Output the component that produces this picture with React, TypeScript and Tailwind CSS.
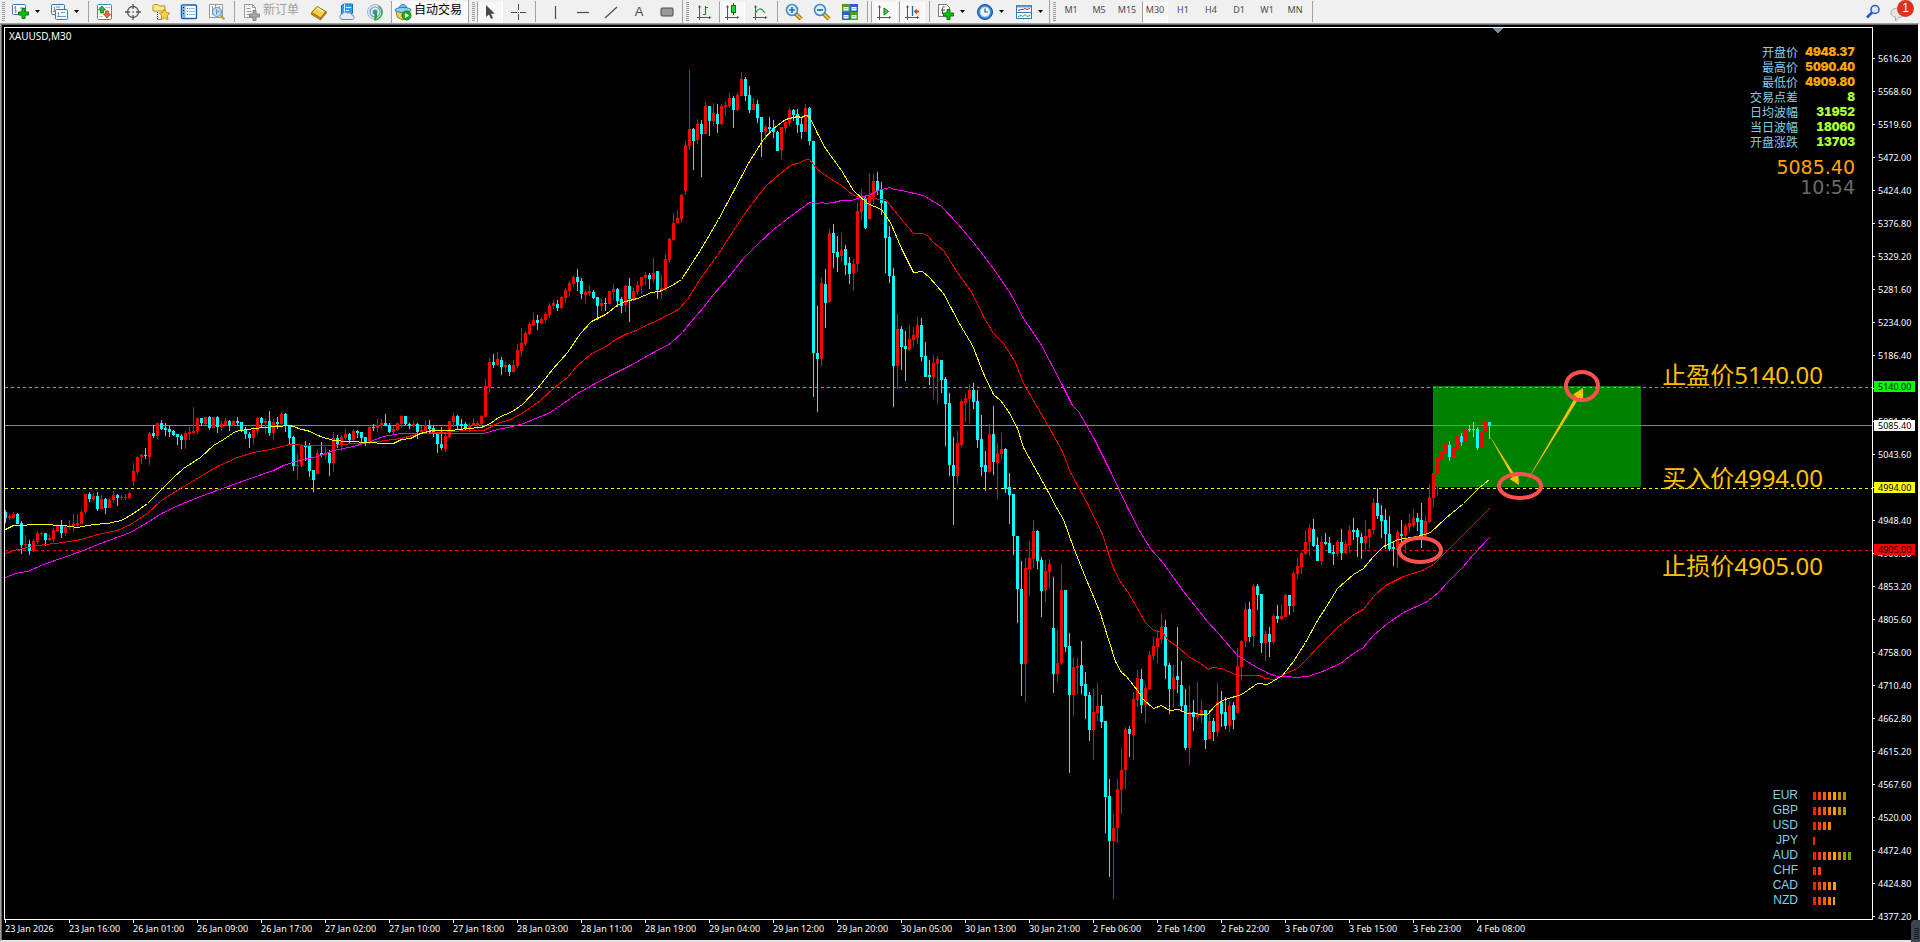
import { useState } from "react";
import type { ReactNode } from "react";
import clsx from "clsx";

type Candle = {
  up: boolean;
  high: number;
  top: number;
  bottom: number;
  low: number;
};

// direction,high,body top,body bottom,low - one entry per 30 minute bar
const CANDLE_DATA = `
c,510,512,518,523 r,514,516,518,520 r,512,514,518,519 c,513,514,524,524 c,521,523,545,554 r,535,544,545,547
c,540,544,551,555 r,539,541,551,552 r,531,533,542,544 r,532,533,534,537 c,533,533,540,546 r,535,538,540,541
r,528,530,539,542 r,524,525,531,532 c,520,525,533,538 r,525,527,533,536 r,520,526,527,530 r,514,524,526,532
r,515,523,525,528 r,510,512,524,524 r,494,494,512,514 c,492,494,499,502 r,493,496,499,501 c,492,496,509,511
r,495,499,509,509 c,498,499,508,514 r,499,500,508,508 r,491,495,500,503 c,494,495,498,506 r,495,497,498,500
r,494,497,498,500 r,492,493,498,499 r,463,471,481,486 r,457,457,472,474 r,454,455,457,464 c,448,455,456,459
r,432,433,457,465 c,425,433,436,438 r,423,423,436,439 c,420,423,429,430 c,423,428,430,436 c,426,429,432,437
c,430,431,435,436 c,434,434,437,445 c,434,436,440,449 r,431,433,440,449 r,427,432,434,440 r,407,431,433,434
r,418,418,431,434 c,418,418,423,426 r,417,417,424,425 c,416,417,428,430 r,417,417,428,428 c,416,417,427,433
r,421,424,427,431 r,418,421,425,426 c,420,421,425,431 r,420,421,425,426 c,417,421,423,426 c,422,422,430,432
c,427,430,434,439 c,432,434,438,448 r,427,430,438,445 r,417,418,431,434 c,417,418,423,427 r,418,421,423,434
c,411,421,433,436 r,419,422,433,440 c,417,422,424,429 r,412,414,424,428 c,413,414,426,432 c,426,426,438,444
c,436,437,466,471 r,454,465,466,479 r,444,445,465,467 c,441,445,447,461 c,443,446,471,477 c,470,470,480,492
r,450,453,474,474 c,442,453,455,457 r,447,453,455,459 c,450,453,463,476 r,432,438,463,472 c,435,438,444,448
r,435,437,445,451 r,429,434,438,440 c,433,434,440,444 r,429,431,440,441 c,430,431,433,438 c,432,432,438,442
c,437,437,442,446 r,425,427,442,444 c,424,427,428,431 r,419,425,428,432 r,419,423,426,429 c,414,423,426,426
c,423,425,432,433 r,426,429,432,435 r,423,423,430,431 r,415,416,424,428 c,416,416,424,425 c,423,424,426,429
r,421,424,426,427 c,423,424,432,439 r,426,430,432,433 r,421,425,431,433 c,420,425,429,433 c,425,428,432,437
c,432,432,444,453 c,427,444,448,450 r,432,436,449,452 r,421,421,437,438 r,413,416,422,427 c,415,416,425,429
c,419,424,426,430 c,422,424,428,431 r,423,425,429,432 r,418,423,426,426 r,421,423,426,429
r,415,416,424,426 r,379,386,417,417 r,358,362,387,393 c,354,362,365,368 r,352,359,365,366 c,357,360,367,375
r,362,365,367,372 c,364,365,372,376 r,360,365,372,372 r,344,350,366,368 r,328,343,351,356 r,331,333,344,346
r,322,324,334,335 r,313,320,325,326 c,315,320,323,330 r,317,319,323,324 r,312,314,320,323 r,303,305,315,318
r,300,303,306,309 c,300,304,308,311 r,296,297,308,309 r,288,290,298,303 r,281,283,291,297 r,276,277,284,287
c,269,277,282,291 c,278,281,294,299 r,290,292,295,303 r,286,291,293,296 c,290,292,298,299 c,297,297,306,320
r,299,303,306,311 c,298,303,304,311 r,291,291,304,304 r,284,289,292,299 c,288,289,301,307 c,297,299,306,313
r,285,286,305,312 c,278,286,299,322 r,288,291,299,301 r,281,285,292,295 r,277,277,286,294 r,272,275,278,285
c,273,275,279,289 r,258,273,279,283 c,271,271,290,299 r,275,288,290,299 r,254,259,289,291
r,238,239,260,263 r,213,223,240,241 r,210,218,223,223 r,194,195,219,222 r,141,145,191,195 r,70,129,146,150
c,128,129,141,170 r,119,124,140,144 c,120,124,134,177 r,102,106,134,134 c,106,106,121,136 r,103,113,121,126
c,104,114,124,133 r,104,106,124,125 r,102,105,107,116 r,93,98,106,108 c,96,98,110,128 r,93,95,110,111
r,72,79,96,96 c,77,79,96,101 c,86,95,110,113 r,98,104,110,110 c,100,104,118,123 c,117,117,132,157
r,125,127,132,140 c,117,127,129,132 c,120,128,132,138 c,131,132,151,151 r,127,127,150,159 r,120,122,128,133
r,108,110,123,126 c,109,110,115,121 c,109,114,125,133 c,117,124,132,139 r,104,108,132,132 c,107,108,141,145
c,141,141,353,397 c,306,353,359,412 r,278,283,359,366 c,269,284,303,328 r,229,233,302,302 c,224,233,253,268
c,236,252,257,272 r,233,250,256,262 c,245,249,265,275 c,257,263,274,284 r,259,264,273,290 r,202,211,264,271
r,189,199,212,220 c,197,198,228,229 r,174,196,219,219 r,174,181,197,204 c,172,181,191,195 c,182,189,203,215
c,201,201,238,273 c,226,237,276,283 c,268,276,366,407 r,314,329,366,389 c,326,329,347,370 c,331,346,349,381
r,325,339,350,351 r,327,335,340,346 r,317,325,338,344 c,318,325,357,361 c,342,356,377,377 c,360,375,377,385
r,355,363,377,399 r,356,359,364,404 c,360,360,380,393 c,377,379,404,446
c,393,403,465,476 c,437,465,476,525 r,431,443,476,485 r,399,401,445,447 r,394,398,403,422 r,384,390,399,423
c,383,390,402,409 c,390,401,440,448 c,415,439,467,476 c,451,465,472,491 r,424,434,472,473 c,406,434,462,475
r,443,453,463,499 r,433,449,454,459 c,448,449,489,493 c,473,487,495,524 c,494,494,536,555 c,536,536,589,623
c,561,589,664,696 r,558,568,664,702 r,541,558,569,596 r,520,531,559,568 c,530,531,561,569 c,557,560,591,617
r,560,571,590,602 r,559,564,572,589 c,577,628,674,693 r,630,663,674,682 r,564,590,663,665 c,590,590,647,652
c,633,646,695,773 r,657,667,695,716 r,658,666,668,694 c,641,665,686,694 c,672,684,696,719 c,692,695,730,741
r,689,712,730,760 r,683,706,713,721 c,695,706,722,728 c,721,721,797,833 c,779,796,841,877 r,814,828,841,899
r,779,789,828,843 r,748,770,790,814 r,727,729,770,789 c,726,729,734,757 r,692,699,735,760 r,670,678,700,707
c,669,679,705,713 r,684,688,705,723 r,651,655,689,690 r,637,646,656,660 r,630,638,647,663 r,614,627,639,644
c,620,627,666,679 c,663,665,689,714 r,665,677,689,707 c,627,676,680,693 c,661,685,706,712 c,689,705,748,750
r,686,712,748,765 c,700,712,717,731 r,682,714,717,721 r,700,710,716,723 c,710,710,740,749 r,710,721,739,739
c,718,721,732,741 r,683,702,732,737 c,691,702,714,727 c,697,712,726,729 r,701,705,725,732 c,702,705,720,729
r,648,666,713,713 r,640,641,667,681 r,603,609,641,647 c,602,609,637,642 r,584,586,636,647 c,584,586,595,610
c,594,594,643,653 r,631,634,643,661 c,627,634,642,657 r,614,616,642,644 c,605,616,619,623 r,605,616,619,620
r,594,595,617,617 c,595,595,606,615 r,571,573,606,612 r,558,566,574,579 r,552,553,567,574 r,530,542,554,555
r,524,528,542,556 c,519,529,546,547 c,537,545,561,561 r,536,542,561,565 c,533,542,544,545 c,537,543,553,553
c,545,552,554,565 r,540,542,554,556 c,529,542,553,560 r,540,544,553,554 r,526,530,545,553 c,518,530,532,540
c,528,530,537,557 c,533,537,543,559 r,520,536,543,551 r,529,529,537,549 r,498,503,530,534 c,488,503,516,519
c,505,515,521,538 c,509,520,534,549 c,516,534,549,551 c,541,547,549,566 r,530,532,550,568 c,520,534,536,547
r,524,526,536,553 r,514,523,527,532 r,509,518,525,528 c,513,518,522,531 c,503,520,537,548 r,515,521,537,540
r,484,497,522,523 r,473,473,498,507 r,447,458,474,496 r,450,452,460,478 r,439,444,453,453 c,441,445,457,461
r,446,448,457,459 r,433,436,449,449 c,433,436,442,446 r,428,429,442,443 c,425,429,430,432 c,422,429,430,437
c,427,429,448,450 r,430,431,448,448 r,422,422,432,442 c,422,422,426,439
`;

const candles: Candle[] = CANDLE_DATA.trim()
  .split(/\s+/)
  .map((row) => {
    const [dir, high, top, bottom, low] = row.split(",");
    return { up: dir === "r", high: +high, top: +top, bottom: +bottom, low: +low };
  });

const averages = [
  {
    color: "#ff00ff",
    points:
      "5,577 15,573 27,571 43,564 63,557 83,550 100,543 130,532 135,529 147,522 161,513 180,504 200,496 222,488 247,479 273,470 283,465 295,461 317,456 333,450 353,446 370,441 383,436 400,433 483,433 497,429 512,426 523,423 535,418 548,413 563,403 577,393 593,384 612,374 632,364 653,352 670,343 682,332 690,322 703,307 713,294 727,278 743,258 757,244 773,229 790,216 809,202 817,203 822,202 825,203 833,202 841,200 851,200 860,197 870,194 878,190 889,187 894,189 901,190 923,195 941,206 957,223 973,242 993,268 1010,293 1023,318 1040,343 1050,362 1062,385 1072,405 1078,411 1093,437 1110,471 1127,507 1140,532 1150,548 1163,563 1183,591 1207,621 1218,633 1237,655 1253,665 1268,673 1277,676 1287,676 1295,677 1307,676 1322,671 1340,663 1353,653 1363,647 1373,635 1387,623 1403,612 1427,601 1438,592 1447,582 1462,567 1473,554 1489,537",
  },
  {
    color: "#ff0000",
    points:
      "5,553 13,550 37,545 63,542 81,539 97,534 117,530 130,524 147,513 161,500 180,488 200,476 217,466 237,457 253,452 270,449 289,444 310,445 333,445 353,443 370,442 400,438 420,433 440,432 465,430 483,430 497,423 510,419 523,412 540,400 553,388 567,377 577,365 590,354 607,345 615,339 627,333 633,331 650,323 659,319 678,309 687,299 700,278 717,255 733,230 745,212 765,186 775,177 790,165 800,162 805,159 809,159 817,169 828,177 841,185 853,195 867,198 885,199 893,209 903,221 913,233 922,233 927,235 933,242 943,250 957,272 972,293 983,316 993,333 1003,343 1015,362 1023,383 1033,400 1047,424 1062,451 1070,472 1087,503 1102,534 1113,568 1121,583 1127,591 1137,608 1145,622 1153,630 1162,632 1168,640 1178,647 1188,656 1200,663 1208,669 1212,667 1221,668 1235,674 1240,675 1259,675 1265,678 1274,679 1283,674 1297,668 1308,657 1317,647 1323,641 1338,626 1355,613 1363,609 1373,596 1385,585 1403,576 1422,570 1433,564 1440,557 1453,544 1470,527 1489,508",
  },
  {
    color: "#ffff00",
    points:
      "5,529 13,525 41,524 63,525 77,527 93,524 107,523 121,520 133,513 147,503 161,489 173,477 183,468 200,457 213,445 223,439 235,431 247,429 263,427 277,426 289,425 293,426 301,429 307,430 320,436 333,440 347,441 370,442 383,443 393,443 401,439 410,438 420,433 432,430 450,430 467,428 481,427 490,423 498,417 512,411 522,404 537,388 552,369 567,352 580,333 591,321 605,314 618,304 625,301 637,298 651,292 659,291 670,286 681,279 701,248 718,219 733,191 749,161 763,139 773,128 785,119 797,116 801,117 805,115 809,116 817,133 825,148 841,170 853,190 867,203 881,209 890,222 901,248 913,272 922,271 929,277 943,293 960,325 972,345 983,373 993,394 1000,400 1008,411 1017,428 1023,447 1033,465 1047,490 1057,509 1063,519 1073,547 1085,577 1100,613 1108,639 1115,661 1121,672 1126,676 1137,690 1143,699 1153,708 1161,705 1169,710 1178,709 1187,713 1207,714 1215,705 1222,700 1241,694 1247,690 1257,683 1267,684 1282,675 1293,661 1305,642 1317,620 1328,603 1337,588 1353,574 1363,568 1373,556 1383,546 1398,539 1417,536 1430,532 1445,518 1463,503 1478,488 1489,479",
  },
];

const prices = [
  "5616.20", "5568.60", "5519.60", "5472.00", "5424.40", "5376.80", "5329.20",
  "5281.60", "5234.00", "5186.40", "5138.80", "5091.20", "5043.60", "4996.00",
  "4948.40", "4900.80", "4853.20", "4805.60", "4758.00", "4710.40", "4662.80",
  "4615.20", "4567.60", "4520.00", "4472.40", "4424.80", "4377.20",
];

const times = [
  "23 Jan 2026", "23 Jan 16:00", "26 Jan 01:00", "26 Jan 09:00", "26 Jan 17:00",
  "27 Jan 02:00", "27 Jan 10:00", "27 Jan 18:00", "28 Jan 03:00", "28 Jan 11:00",
  "28 Jan 19:00", "29 Jan 04:00", "29 Jan 12:00", "29 Jan 20:00", "30 Jan 05:00",
  "30 Jan 13:00", "30 Jan 21:00", "2 Feb 06:00", "2 Feb 14:00", "2 Feb 22:00",
  "3 Feb 07:00", "3 Feb 15:00", "3 Feb 23:00", "4 Feb 08:00",
];

const stats = [
  { label: "开盘价", value: "4948.37", color: "text-[#ffa500]" },
  { label: "最高价", value: "5090.40", color: "text-[#ffa500]" },
  { label: "最低价", value: "4909.80", color: "text-[#ffa500]" },
  { label: "交易点差", value: "8", color: "text-[#adff2f]" },
  { label: "日均波幅", value: "31952", color: "text-[#adff2f]" },
  { label: "当日波幅", value: "18060", color: "text-[#adff2f]" },
  { label: "开盘涨跌", value: "13703", color: "text-[#adff2f]" },
];

const barColors = [
  "bg-[#ff2000]", "bg-[#ff4000]", "bg-[#ff6000]", "bg-[#ff8000]",
  "bg-[#ff9f00]", "bg-[#cc8800]", "bg-[#999900]", "bg-[#66a000]",
];

const strengths = [
  { code: "EUR", width: 33 },
  { code: "GBP", width: 33 },
  { code: "USD", width: 18 },
  { code: "JPY", width: 2 },
  { code: "AUD", width: 38 },
  { code: "CHF", width: 8 },
  { code: "CAD", width: 23 },
  { code: "NZD", width: 22 },
];

const periods = ["M1", "M5", "M15", "M30", "H1", "H4", "D1", "W1", "MN"];

function Svg({ children }: { children: ReactNode }) {
  return (
    <svg width="18" height="18" viewBox="0 0 18 18" fill="none" className="shrink-0">
      {children}
    </svg>
  );
}

function Plus({ x, y, color = "#12c312", edge = "#067a06" }: { x: number; y: number; color?: string; edge?: string }) {
  return (
    <path
      d={`M${x + 4} ${y + 0.5}h3v3.5h3.5v3h-3.5v3.5h-3v-3.5h-3.5v-3h3.5z`}
      fill={color}
      stroke={edge}
    />
  );
}

function NewChartIcon() {
  return (
    <Svg>
      <rect x="0.5" y="1.5" width="13" height="10" rx="1" fill="#f4f9fd" stroke="#3b77ad" />
      <path d="M3.5 3v7M2 5h1M4 8h1M8 5h4" stroke="#7b97ad" />
      <Plus x={6} y={5} />
    </Svg>
  );
}

function ProfilesIcon() {
  return (
    <Svg>
      <rect x="0.5" y="1.5" width="13" height="10" rx="1" fill="#e9f3fb" stroke="#3b77ad" />
      <path d="M3.5 4v5M2 8.500h8M5 4h4" stroke="#7b97ad" />
      <rect x="4.500" y="6.500" width="12" height="10" rx="1" fill="#f4f9fd" stroke="#3b77ad" />
      <path d="M7.500 9v5M6 13.500h9M10 9.500h4" stroke="#7b97ad" />
    </Svg>
  );
}

function MarketWatchIcon() {
  return (
    <Svg>
      <rect x="1.500" y="1.500" width="14" height="15" rx="1" fill="#fff" stroke="#4a86bd" />
      <path d="M3 4.500h4M9 4.500h5M3 13.500h4" stroke="#b7c8d6" />
      <path d="M6 3l3.500 4H7.500v3h-3V7h-2z" fill="#28c228" stroke="#0a7a0a" strokeWidth="0.8" />
      <path d="M11 15L7.500 11h2V8h3v3h2z" fill="#ff6a3c" stroke="#b5330d" strokeWidth="0.8" />
    </Svg>
  );
}

function DataWindowIcon() {
  return (
    <Svg>
      <circle cx="9" cy="9" r="5.500" stroke="#555" strokeWidth="1.300" />
      <path d="M9 1v5M9 12v5M1 9h5M12 9h5" stroke="#555" strokeWidth="1.300" />
      <path d="M9 8v2M8 9h2" stroke="#555" strokeWidth="0.6" />
    </Svg>
  );
}

function NavigatorIcon() {
  return (
    <Svg>
      <path d="M1 8V2.500l1-1h4l1.500 1.500H13V8z" fill="#ffe98a" stroke="#b98e1c" />
      <path d="M5.500 9v8M5.500 16.500h4" stroke="#333" strokeDasharray="1 1" />
      <path
        d="M12.500 6l1.800 3.600 3.600.5-2.700 2.600.8 4-3.500-1.900-3.500 1.900.8-4-2.700-2.600 3.600-.5z"
        fill="#ffd13b"
        stroke="#b57f12"
        strokeWidth="0.8"
      />
    </Svg>
  );
}

function TerminalIcon() {
  return (
    <Svg>
      <rect x="1.500" y="2" width="15" height="13.500" rx="1" fill="#fff" stroke="#1d5fb3" strokeWidth="1.400" />
      <rect x="2" y="2.500" width="3.500" height="12.500" fill="#7fb4ea" />
      <path d="M7 5.500h1M7 8.500h1M7 11.500h1" stroke="#d22" />
      <path d="M9 5.500h6M9 8.500h6M9 11.500h6" stroke="#9bb7d6" />
      <path d="M3.500 4v1M3.500 7v1M3.500 10v1" stroke="#123" />
    </Svg>
  );
}

function TesterIcon() {
  return (
    <Svg>
      <rect x="1.500" y="1.500" width="13" height="13" fill="#fbfbfb" stroke="#999" />
      <path d="M4.500 3v9M7.500 2v6M11.500 3v6" stroke="#9a9a9a" />
      <circle cx="9" cy="9" r="4.500" fill="#b9dcf4" fillOpacity="0.9" stroke="#5f9dcc" strokeWidth="1.200" />
      <path d="M8.500 6.500v5M10.500 7.500v2" stroke="#5f8dad" />
      <path d="M12.500 12.500l4 4" stroke="#c99a1a" strokeWidth="2" />
    </Svg>
  );
}

function NewOrderIcon() {
  return (
    <Svg>
      <path d="M1.500 1.500h8l3 3v10h-11z" fill="#f7f7f7" stroke="#9a9a9a" />
      <path d="M9.500 1.500v3h3M3.500 5.500h4M3.500 8.500h5M3.500 11.500h3" stroke="#9a9a9a" />
      <Plus x={6} y={7} color="#a8a8a8" edge="#858585" />
    </Svg>
  );
}

function MetaEditorIcon() {
  return (
    <Svg>
      <path d="M1.500 9.500L7 3.500l9 5-5.500 6.500z" fill="#f7cf4c" stroke="#9b6a0c" />
      <path d="M1.500 9.500l9 5.500v2l-9-5.500zM16 8.500l-5.500 6.500v2l6-7z" fill="#c98f1c" stroke="#9b6a0c" strokeWidth="0.8" />
      <path d="M7 5l6 3.500" stroke="#fff1b0" strokeWidth="1.500" />
    </Svg>
  );
}

function CloudIcon() {
  return (
    <Svg>
      <path d="M3.500 10.500v-8l3-1.500h8v9.500z" fill="#27a4ee" stroke="#0d6fb8" />
      <path d="M6.500 1v9M8 4.500h5M8 7.500h3" stroke="#e5f6ff" />
      <path
        d="M4 16.500a2.800 2.800 0 01.3-5.500 3.200 3.200 0 015.200-1 3.200 3.200 0 014.500 2 2.300 2.300 0 01.5 4.500z"
        fill="#e3ebf8"
        stroke="#6f86b5"
      />
    </Svg>
  );
}

function SignalsIcon() {
  return (
    <Svg>
      <circle cx="9" cy="9" r="7.500" fill="#dcebf0" stroke="#9fb6d0" />
      <circle cx="9" cy="9" r="5" stroke="#77a3bd" strokeWidth="1.200" />
      <circle cx="9" cy="9" r="2.500" fill="#3b8fd0" />
      <path d="M9 9v8a8 8 0 007-8 8 8 0 00-3.500-6" stroke="#37ab37" strokeWidth="1.500" />
      <path d="M9 9h2v5.500L9 17z" fill="#2ba32b" />
    </Svg>
  );
}

function AutoTradingIcon() {
  return (
    <Svg>
      <path d="M2 8.500l1.500 6 5 2.500 6-3 1.500-5.500z" fill="#f4cf50" stroke="#a07c15" />
      <path d="M5 6c0-6 8-6 8 0z" fill="#7cc3ec" stroke="#2d7fb0" />
      <ellipse cx="9" cy="7" rx="8" ry="2.500" fill="#8fd0f2" stroke="#2d7fb0" />
      <circle cx="12.500" cy="12.500" r="4.500" fill="#1fb01f" stroke="#0c7d0c" />
      <path d="M11 10l4 2.500-4 2.500z" fill="#fff" />
    </Svg>
  );
}

function ArrowIcon() {
  return (
    <Svg>
      <path d="M5 2v12l3-2.500 2 4.500 2-1-2-4.200h3.800z" fill="#4a4a4a" />
    </Svg>
  );
}

function CrosshairIcon() {
  return (
    <Svg>
      <path d="M9.500 1v6M9.500 11v6M2 9.500h6M11 9.500h6M9 9.500h1" stroke="#4a4a4a" />
    </Svg>
  );
}

function LineToolIcon({ d }: { d: string }) {
  return (
    <Svg>
      <path d={d} stroke="#4a4a4a" strokeWidth="1.200" />
    </Svg>
  );
}

function RectIcon() {
  return (
    <Svg>
      <rect x="3" y="5" width="12" height="8" rx="1" fill="#999" stroke="#4a4a4a" />
    </Svg>
  );
}

function Axes({ children }: { children: ReactNode }) {
  return (
    <Svg>
      <path d="M4.500 3v14M2 14.500h13" stroke="#555" />
      <path d="M4.500 2L3 4.500h3zM16.500 14.500L14 13v3z" fill="#555" />
      {children}
    </Svg>
  );
}

function BarChartIcon() {
  return (
    <Axes>
      <path d="M10.500 3v9M8 11.500h2M11 4.500h2" stroke="#1a8a1a" strokeWidth="1.200" />
    </Axes>
  );
}

function CandleChartIcon() {
  return (
    <Axes>
      <path d="M10.500 0v12" stroke="#0a6a0a" />
      <rect x="8.500" y="2.500" width="4" height="7" fill="#1fd53f" stroke="#0a7a0a" />
    </Axes>
  );
}

function LineChartIcon() {
  return (
    <Axes>
      <path d="M4 11c3-6 6-7 10-1" stroke="#2c9a2c" strokeWidth="1.200" />
    </Axes>
  );
}

function ZoomIcon({ plus }: { plus?: boolean }) {
  return (
    <Svg>
      <path d="M11 11l5 5" stroke="#9b7409" strokeWidth="4" />
      <path d="M11 11l5 5" stroke="#f0c62e" strokeWidth="2" />
      <circle cx="7" cy="7" r="5.500" fill="#d8eefc" stroke="#3f87c4" strokeWidth="1.500" />
      <path d={plus ? "M4 7h6M7 4v6" : "M4 7h6"} stroke="#2a6da6" strokeWidth="1.700" />
    </Svg>
  );
}

function TileIcon() {
  return (
    <Svg>
      <path d="M1 1h8v8H1zM9 9h8v8H9z" fill="#47a312" />
      <path d="M9 1h8v8H9zM1 9h8v8H1z" fill="#2a5fd0" />
      <path d="M2.500 4h5v3.500h-5zM10.500 4h5v3.500h-5zM2.500 12h5v3.500h-5zM10.500 12h5v3.500h-5z" fill="#f4f8ff" />
      <path d="M3.500 5.500h3M11.500 5.500h3M3.500 13.500h3M11.500 13.500h3" stroke="#8fb0d8" />
    </Svg>
  );
}

function AutoScrollIcon() {
  return (
    <Axes>
      <path d="M9 5l4.500 3.500L9 12z" fill="#3fd04f" stroke="#0a7a0a" />
    </Axes>
  );
}

function ShiftIcon() {
  return (
    <Axes>
      <path d="M9.500 3v10" stroke="#1c64a8" strokeWidth="1.300" />
      <path d="M10.500 8.500l3.500-3v2h2v2h-2v2z" fill="#d94a1c" />
    </Axes>
  );
}

function IndicatorsIcon() {
  return (
    <Svg>
      <path d="M1.500 1.500h8l3 3v9h-11z" fill="#fafafa" stroke="#777" />
      <path d="M7.500 4c-2-.5-2 1-2 2.500v4.500M4 7h4" stroke="#444" />
      <Plus x={6} y={6} />
    </Svg>
  );
}

function ClockIcon() {
  return (
    <Svg>
      <circle cx="9" cy="9" r="7.500" fill="#2f84dc" stroke="#0f4f9c" />
      <circle cx="9" cy="9" r="5" fill="#eef7ff" stroke="#9ccaf2" />
      <path d="M9 5.500V9h3" stroke="#555" strokeWidth="1.200" />
    </Svg>
  );
}

function TemplateIcon() {
  return (
    <Svg>
      <rect x="1.500" y="2.500" width="15" height="13" fill="#fff" stroke="#3a78b8" />
      <path d="M2 3.500h14" stroke="#5b9ce0" strokeWidth="2" />
      <path d="M2 9.500h14" stroke="#3a78b8" />
      <path d="M3 7.500l3-1h2l2-1 2 1 3-1" stroke="#a8322a" />
      <path d="M3 13.500l3-1 2 1 2-2 2 2 3-1" stroke="#2c9a2c" />
    </Svg>
  );
}

function ToolButton({ label, pressed, children }: { label: string; pressed?: boolean; children: ReactNode }) {
  return (
    <button
      type="button"
      aria-label={label}
      className={clsx(
        "mx-px flex h-[22px] w-[26px] items-center justify-center border",
        pressed ? "border-t-[#f0f0f0] border-r-white border-b-white border-l-[#a0a0a0] bg-[#f8f8f8]" : "border-transparent",
      )}
    >
      {children}
    </button>
  );
}

function MenuButton({ label, children }: { label: string; children: ReactNode }) {
  return (
    <button type="button" aria-label={label} className="flex h-[22px] w-[39px] items-center gap-[5px] pl-[5px]">
      {children}
      <svg width="5" height="3" viewBox="0 0 5 3">
        <path d="M0 0h5L2.500 3z" fill="#000" />
      </svg>
    </button>
  );
}

function Separator() {
  return <div className="mr-0.5 ml-[3px] h-[21px] w-px bg-[#a0a0a0]" />;
}

function Grip() {
  return (
    <svg width="3" height="19" className="shrink-0">
      {Array.from({ length: 10 }, (_, i) => (
        <rect key={i} y={i * 2} width="3" height="1" fill="#9a9a9a" />
      ))}
    </svg>
  );
}

function GroupEnd() {
  return (
    <div className="flex items-center gap-[3px] pr-px">
      <div className="h-[23px] w-px bg-[#a0a0a0]" />
      <Grip />
    </div>
  );
}

function Toolbar() {
  const [period, setPeriod] = useState("M30");

  return (
    <header className="flex h-[23px] shrink-0 items-center bg-[#f0f0f0] pl-0.5 text-xs text-black">
      <Grip />
      <div className="flex items-center pl-0.5">
        <MenuButton label="New chart"><NewChartIcon /></MenuButton>
        <MenuButton label="Profiles"><ProfilesIcon /></MenuButton>
      </div>
      <Separator />
      <ToolButton label="Market watch"><MarketWatchIcon /></ToolButton>
      <ToolButton label="Data window"><DataWindowIcon /></ToolButton>
      <ToolButton label="Navigator"><NavigatorIcon /></ToolButton>
      <ToolButton label="Terminal"><TerminalIcon /></ToolButton>
      <ToolButton label="Strategy tester"><TesterIcon /></ToolButton>
      <Separator />
      <button type="button" disabled className="flex h-[22px] items-center gap-0.5 px-1.5 leading-4 whitespace-nowrap text-[#a0a0a0]">
        <NewOrderIcon />
        <span className="pb-1.5">新订单</span>
      </button>
      <ToolButton label="MetaEditor"><MetaEditorIcon /></ToolButton>
      <ToolButton label="Cloud"><CloudIcon /></ToolButton>
      <ToolButton label="Signals"><SignalsIcon /></ToolButton>
      <button
        type="button"
        className="ml-0.5 flex h-[22px] items-center gap-0.5 border-r border-l border-r-white border-l-[#a0a0a0] bg-[#f8f8f8] pr-[5px] pl-0.5 leading-4 whitespace-nowrap"
      >
        <AutoTradingIcon />
        <span className="pb-1.5">自动交易</span>
      </button>
      <GroupEnd />
      <ToolButton label="Cursor" pressed><ArrowIcon /></ToolButton>
      <ToolButton label="Crosshair"><CrosshairIcon /></ToolButton>
      <Separator />
      <div className="flex items-center pr-px pl-[3px]">
        <ToolButton label="Vertical line"><LineToolIcon d="M9.500 3v13" /></ToolButton>
        <ToolButton label="Horizontal line"><LineToolIcon d="M3 9.500h12" /></ToolButton>
        <ToolButton label="Trendline"><LineToolIcon d="M3 15L15 4" /></ToolButton>
        <ToolButton label="Text">
          <span className="font-['Liberation_Sans'] text-[13px] leading-4 text-[#4a4a4a]">A</span>
        </ToolButton>
        <ToolButton label="Rectangle"><RectIcon /></ToolButton>
      </div>
      <GroupEnd />
      <ToolButton label="Bar chart"><BarChartIcon /></ToolButton>
      <ToolButton label="Candlesticks" pressed><CandleChartIcon /></ToolButton>
      <ToolButton label="Line chart"><LineChartIcon /></ToolButton>
      <Separator />
      <ToolButton label="Zoom in"><ZoomIcon plus /></ToolButton>
      <ToolButton label="Zoom out"><ZoomIcon /></ToolButton>
      <ToolButton label="Tile windows"><TileIcon /></ToolButton>
      <Separator />
      <ToolButton label="Auto scroll" pressed><AutoScrollIcon /></ToolButton>
      <ToolButton label="Chart shift" pressed><ShiftIcon /></ToolButton>
      <Separator />
      <MenuButton label="Indicators"><IndicatorsIcon /></MenuButton>
      <MenuButton label="Periods"><ClockIcon /></MenuButton>
      <MenuButton label="Templates"><TemplateIcon /></MenuButton>
      <GroupEnd />
      {periods.map((p) => (
        <button
          key={p}
          type="button"
          onClick={() => setPeriod(p)}
          className={clsx(
            "mx-px h-[22px] w-[26px] border pb-1 font-['Noto_Sans',sans-serif] text-[9px] leading-4 text-[#4a4a4a]",
            p === period ? "border-t-[#f0f0f0] border-r-white border-b-white border-l-[#a0a0a0] bg-[#f8f8f8]" : "border-transparent",
          )}
        >
          {p}
        </button>
      ))}
      <Separator />
      <div className="ml-auto flex items-center gap-2 pr-1.5">
        <button type="button" aria-label="Search" className="h-[18px]">
          <Svg>
            <circle cx="11" cy="6.500" r="4" fill="#dbe9ff" stroke="#2456c8" strokeWidth="1.500" />
            <path d="M8 9.500L3 14.500" stroke="#2456c8" strokeWidth="2.500" />
          </Svg>
        </button>
        <button type="button" aria-label="Messages" className="relative h-[20px] w-6">
          <svg width="24" height="20" viewBox="0 0 24 20" className="block">
            <path d="M1 11c0-3 3-5 7-5s7 2 7 5-3 4.500-6 4.500L5.500 19v-4C2.500 14.500 1 13 1 11z" fill="#e4e4ea" stroke="#a9a9b3" />
          </svg>
          <span className="absolute -top-0.5 right-0 size-[17px] rounded-full bg-[#e0301e] text-center font-['Liberation_Sans'] text-xs leading-[17px] text-white">
            1
          </span>
        </button>
      </div>
    </header>
  );
}

// Plot coordinates start at the inner corner of the chart frame.
function Plot() {
  return (
    <svg className="absolute inset-0 size-full" shapeRendering="crispEdges">
      <g transform="translate(-5 -28)">
        <rect x="1433" y="386" width="208" height="101" fill="#008000" />
        <path d="M1492 28h11l-5 5h-1z" fill="#778899" />
      </g>
      <line x1="0" x2="100%" y1="397.500" y2="397.500" stroke="#778899" />
      <line x1="0" x2="100%" y1="359.500" y2="359.500" stroke="#00ff00" strokeDasharray="3 3" />
      <line x1="0" x2="100%" y1="460.500" y2="460.500" stroke="#ffff00" strokeDasharray="3 3" />
      <line x1="0" x2="100%" y1="522.500" y2="522.500" stroke="#ff0000" strokeDasharray="3 3" />
      <g transform="translate(-5 -28)">
        {candles.map((c, i) => {
          const x = 5 + i * 4;
          return (
            <g key={i} fill={c.up ? "#ff0000" : "#00ffff"}>
              <rect x={x} y={c.high} width="1" height={Math.max(1, c.low - c.high)} />
              <rect x={x - 1} y={c.top} width="3" height={Math.max(1, c.bottom - c.top)} />
            </g>
          );
        })}
      </g>
      <g transform="translate(-5 -28)" fill="none">
        {averages.map((a) => (
          <polyline key={a.color} points={a.points} stroke={a.color} transform="translate(0.5 0.5)" />
        ))}
      </g>
      <g transform="translate(-5 -28)" shapeRendering="geometricPrecision">
        <path d="M1488.500 434L1515.200 475.600 1518.200 473.800 1519 485 1509.600 479 1512.600 477.200z" fill="#ffc000" />
        <path d="M1524 486L1575.800 396.500 1573 394.600 1583 388 1583 400 1578.800 398.300z" fill="#ffc000" />
        <g fill="none" stroke="#ff5050" strokeWidth="4">
          <ellipse cx="1582" cy="386" rx="16" ry="14" />
          <ellipse cx="1520" cy="486" rx="21" ry="12" />
          <ellipse cx="1420" cy="550" rx="21" ry="12" />
        </g>
      </g>
    </svg>
  );
}

function InfoPanel() {
  return (
    <div className="absolute top-4 right-[17px] flex flex-col text-right">
      <dl>
        {stats.map((s) => (
          <div key={s.label} className="flex h-[15px] items-center justify-end leading-[15px]">
            <dt className="text-xs leading-[15px] text-[#87ceeb]">{s.label}</dt>
            <dd className={clsx("w-[57px] font-['Inter'] text-xs leading-[15px] font-black tabular-nums", s.color)}>
              {s.value}
            </dd>
          </div>
        ))}
      </dl>
      <p className="mt-2 font-['DejaVu_Sans'] text-[19px] leading-5 text-[#ffa500]">5085.40</p>
      <p className="font-['DejaVu_Sans'] text-[19px] leading-5 text-[#696969]">10:54</p>
    </div>
  );
}

function StrengthPanel() {
  return (
    <ul className="absolute right-[17px] bottom-[11px]">
      {strengths.map((s) => (
        <li key={s.code} className="flex h-[15px] items-center gap-[15px]">
          <span className="w-8 text-right font-['Liberation_Sans'] text-xs leading-[15px] text-[#87ceeb]">{s.code}</span>
          <span className="w-[42px]">
            <span className="flex gap-0.5 overflow-hidden" style={{ width: s.width }}>
              {barColors.map((color) => (
                <span key={color} className={clsx("h-2 w-[3px] shrink-0", color)} />
              ))}
            </span>
          </span>
        </li>
      ))}
    </ul>
  );
}

const noteClass =
  "absolute right-[49px] whitespace-nowrap font-['Noto_Sans','Noto_Sans_CJK_SC',sans-serif] text-2xl leading-8 text-[#ffc000]";
const tagClass = "absolute left-px h-[11px] w-[41px] pl-1 text-[9px] leading-[11px] text-black";

export default function App() {
  return (
    <div className="flex h-screen min-h-[600px] flex-col overflow-hidden bg-[#f0f0f0] font-['Noto_Sans_CJK_SC',sans-serif]">
      <Toolbar />
      <main className="relative flex min-h-0 flex-1 border-t border-r-2 border-b-2 border-l border-t-[#a0a0a0] border-r-white border-b-[#e3e3e3] border-l-[#a0a0a0]">
        <div className="flex min-w-0 flex-1 border-t border-l border-[#696969] bg-black pt-0.5 pl-0.5">
          <div className="flex min-w-0 flex-1 flex-col">
            <section className="relative min-h-0 flex-1 overflow-hidden border border-white">
              <Plot />
              <h1 className="absolute top-0 left-1 font-['Noto_Sans',sans-serif] text-[10px] leading-4 text-white">
                XAUUSD,M30
              </h1>
              <InfoPanel />
              <p className={clsx(noteClass, "top-[331px]")}>止盈价5140.00</p>
              <p className={clsx(noteClass, "top-[434px]")}>买入价4994.00</p>
              <p className={clsx(noteClass, "top-[522px]")}>止损价4905.00</p>
              <StrengthPanel />
            </section>
            <div className="flex h-5 shrink-0 pl-px font-['Noto_Sans',sans-serif] text-[9px] text-white">
              {times.map((t) => (
                <div key={t} className="w-16 shrink-0">
                  <div className="h-[3px] w-px bg-white" />
                  <span className="block leading-3 whitespace-nowrap">{t}</span>
                </div>
              ))}
            </div>
          </div>
          <aside className="relative w-[45px] shrink-0 pt-[15px] font-['Noto_Sans',sans-serif] text-[9px] text-white">
            {prices.map((p) => (
              <div key={p} className="flex h-[33px] items-center gap-[3px]">
                <span className="h-px w-0.5 bg-white" />
                <span className="leading-4">{p}</span>
              </div>
            ))}
            <span className={clsx(tagClass, "top-[354px] bg-[#00ff00]")}>5140.00</span>
            <span className={clsx(tagClass, "top-[393px] bg-white")}>5085.40</span>
            <span className={clsx(tagClass, "top-[455px] bg-[#ffff00]")}>4994.00</span>
            <span className={clsx(tagClass, "top-[517px] bg-[#ff0000]")}>4905.00</span>
          </aside>
        </div>
        <svg width="9" height="22" className="absolute -right-0.5 -bottom-0.5">
          <path d="M0 3l2-3h7v22H0z" fill="#3f4352" />
          <path d="M3 8.500h5M3 10.500h5M3 12.500h5M3 14.500h5M3 16.500h5M3 18.500h5" stroke="#171a24" />
        </svg>
      </main>
    </div>
  );
}
